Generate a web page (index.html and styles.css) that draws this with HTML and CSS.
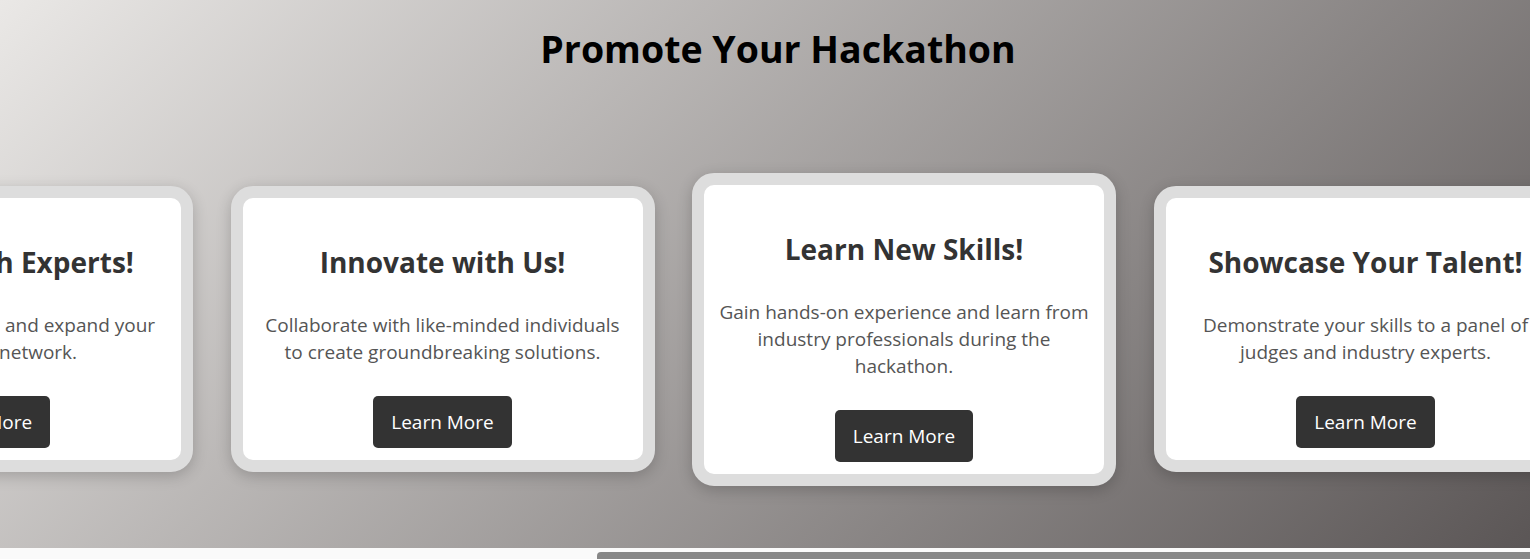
FILE: index.html
```html
<!DOCTYPE html>
<html lang="en">
<head>
<meta charset="utf-8">
<title>Promote Your Hackathon</title>
<link rel="stylesheet" href="styles.css">
</head>
<body>
<section class="promo">
  <h1 class="promo-title">Promote Your Hackathon</h1>
  <div class="carousel">
    <div class="track">
      <article class="card">
        <h2 class="card-title">Connect with Experts!</h2>
        <p class="card-text">Meet industry leaders and expand your professional network.</p>
        <button class="card-btn">Learn More</button>
      </article>
      <article class="card">
        <h2 class="card-title">Innovate with Us!</h2>
        <p class="card-text">Collaborate with like-minded individuals to create groundbreaking solutions.</p>
        <button class="card-btn">Learn More</button>
      </article>
      <article class="card">
        <h2 class="card-title">Learn New Skills!</h2>
        <p class="card-text">Gain hands-on experience and learn from industry professionals during the hackathon.</p>
        <button class="card-btn">Learn More</button>
      </article>
      <article class="card">
        <h2 class="card-title">Showcase Your Talent!</h2>
        <p class="card-text">Demonstrate your skills to a panel of judges and industry experts.</p>
        <button class="card-btn">Learn More</button>
      </article>
    </div>
  </div>
</section>
<div class="scrollbar"><div class="scrollbar-thumb"></div></div>
</body>
</html>
```

FILE: styles.css
```css
html, body {
  margin: 0;
  padding: 0;
}

body {
  font-family: "Open Sans", "Noto Sans", sans-serif;
  background: #fafafa;
  overflow: hidden;
}

.promo {
  box-sizing: border-box;
  height: 548px;
  padding-top: 24px;
  display: flex;
  flex-direction: column;
  background: linear-gradient(135deg, #eae8e6 0%, #5b5656 100%);
}

.promo-title {
  margin: 0;
  padding-left: 26px;
  text-align: center;
  font-size: 37.5px;
  line-height: 50px;
  font-weight: 700;
  color: #000;
}

.carousel {
  flex: 1;
  margin-top: 36px;
  overflow: hidden;
  display: flex;
  align-items: center;
}

.track {
  display: flex;
  align-items: center;
  gap: 37.5px;
  margin-left: -231px;
}

.card {
  box-sizing: border-box;
  flex: 0 0 424px;
  width: 424px;
  padding: 46px 14px 12px;
  background: #fff;
  border: 12px solid #dddddd;
  border-radius: 22px;
  box-shadow: 0 4px 15px rgba(0, 0, 0, 0.2);
  display: flex;
  flex-direction: column;
  align-items: center;
  text-align: center;
}

.card-title {
  margin: 0 0 32px;
  font-size: 28px;
  line-height: 36px;
  font-weight: 700;
  color: #333;
}

.card-text {
  margin: 0 0 30px;
  font-size: 19px;
  line-height: 27px;
  color: #555;
}

.card-btn {
  font-family: inherit;
  font-size: 19px;
  line-height: 26px;
  padding: 13px 18px;
  border: none;
  border-radius: 5px;
  background: #333;
  color: #fff;
  cursor: pointer;
}

.scrollbar {
  height: 11px;
  background: #fafafa;
  display: flex;
  align-items: flex-end;
}

.scrollbar-thumb {
  margin-left: 597px;
  flex: 1;
  height: 7px;
  background: #878787;
  border-top-left-radius: 4px;
}
```
